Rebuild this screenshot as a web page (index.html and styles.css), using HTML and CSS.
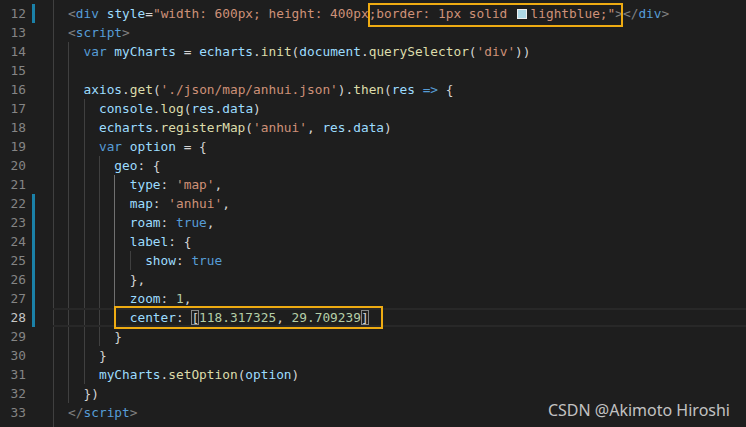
FILE: index.html
```html
<!DOCTYPE html>
<html>
<head>
<meta charset="utf-8">
<link rel="stylesheet" href="styles.css">
</head>
<body>
<div class="editor">
  <div class="ln first"><span class="num"></span><span class="git"></span><span class="code"><span class="ind"></span><span class="ind"></span></span></div>
  <div class="ln"><span class="num">12</span><span class="git mod"></span><span class="code"><span class="ind"></span><span class="ind"></span><span class="t">&lt;</span><span class="k">div</span> <span class="a">style</span>=<span class="s">"width: 600px; height: 400px;border: 1px solid </span><span class="swatch"></span><span class="s">lightblue;"</span><span class="t">&gt;&lt;/</span><span class="k">div</span><span class="t">&gt;</span></span></div>
  <div class="ln"><span class="num">13</span><span class="git"></span><span class="code"><span class="ind"></span><span class="ind"></span><span class="t">&lt;</span><span class="k">script</span><span class="t">&gt;</span></span></div>
  <div class="ln"><span class="num">14</span><span class="git"></span><span class="code"><span class="ind"></span><span class="ind"></span><span class="ind"></span><span class="k">var</span> <span class="a">myCharts</span> = <span class="a">echarts</span>.<span class="f">init</span>(<span class="a">document</span>.<span class="f">querySelector</span>(<span class="s">'div'</span>))</span></div>
  <div class="ln"><span class="num">15</span><span class="git"></span><span class="code"><span class="ind"></span><span class="ind"></span><span class="ind"></span></span></div>
  <div class="ln"><span class="num">16</span><span class="git"></span><span class="code"><span class="ind"></span><span class="ind"></span><span class="ind"></span><span class="a">axios</span>.<span class="f">get</span>(<span class="s">'./json/map/anhui.json'</span>).<span class="f">then</span>(<span class="a">res</span> <span class="k">=&gt;</span> {</span></div>
  <div class="ln"><span class="num">17</span><span class="git"></span><span class="code"><span class="ind"></span><span class="ind"></span><span class="ind"></span><span class="ind"></span><span class="a">console</span>.<span class="f">log</span>(<span class="a">res</span>.<span class="a">data</span>)</span></div>
  <div class="ln"><span class="num">18</span><span class="git"></span><span class="code"><span class="ind"></span><span class="ind"></span><span class="ind"></span><span class="ind"></span><span class="a">echarts</span>.<span class="f">registerMap</span>(<span class="s">'anhui'</span>, <span class="a">res</span>.<span class="a">data</span>)</span></div>
  <div class="ln"><span class="num">19</span><span class="git"></span><span class="code"><span class="ind"></span><span class="ind"></span><span class="ind"></span><span class="ind"></span><span class="k">var</span> <span class="a">option</span> = {</span></div>
  <div class="ln"><span class="num">20</span><span class="git"></span><span class="code"><span class="ind"></span><span class="ind"></span><span class="ind"></span><span class="ind"></span><span class="ind"></span><span class="a">geo</span>: {</span></div>
  <div class="ln"><span class="num">21</span><span class="git"></span><span class="code"><span class="ind"></span><span class="ind"></span><span class="ind"></span><span class="ind"></span><span class="ind"></span><span class="ind act"></span><span class="a">type</span>: <span class="s">'map'</span>,</span></div>
  <div class="ln"><span class="num">22</span><span class="git mod"></span><span class="code"><span class="ind"></span><span class="ind"></span><span class="ind"></span><span class="ind"></span><span class="ind"></span><span class="ind act"></span><span class="a">map</span>: <span class="s">'anhui'</span>,</span></div>
  <div class="ln"><span class="num">23</span><span class="git mod"></span><span class="code"><span class="ind"></span><span class="ind"></span><span class="ind"></span><span class="ind"></span><span class="ind"></span><span class="ind act"></span><span class="a">roam</span>: <span class="k">true</span>,</span></div>
  <div class="ln"><span class="num">24</span><span class="git mod"></span><span class="code"><span class="ind"></span><span class="ind"></span><span class="ind"></span><span class="ind"></span><span class="ind"></span><span class="ind act"></span><span class="a">label</span>: {</span></div>
  <div class="ln"><span class="num">25</span><span class="git mod"></span><span class="code"><span class="ind"></span><span class="ind"></span><span class="ind"></span><span class="ind"></span><span class="ind"></span><span class="ind act"></span><span class="ind"></span><span class="a">show</span>: <span class="k">true</span></span></div>
  <div class="ln"><span class="num">26</span><span class="git mod"></span><span class="code"><span class="ind"></span><span class="ind"></span><span class="ind"></span><span class="ind"></span><span class="ind"></span><span class="ind act"></span>},</span></div>
  <div class="ln"><span class="num">27</span><span class="git mod"></span><span class="code"><span class="ind"></span><span class="ind"></span><span class="ind"></span><span class="ind"></span><span class="ind"></span><span class="ind act"></span><span class="a">zoom</span>: <span class="n">1</span>,</span></div>
  <div class="ln cur"><span class="num">28</span><span class="git mod"></span><span class="code"><span class="ind"></span><span class="ind"></span><span class="ind"></span><span class="ind"></span><span class="ind"></span><span class="ind act"></span><span class="a">center</span>: <span class="br">[</span><span class="n">118.317325</span>, <span class="n">29.709239</span><span class="br">]</span></span></div>
  <div class="ln"><span class="num">29</span><span class="git"></span><span class="code"><span class="ind"></span><span class="ind"></span><span class="ind"></span><span class="ind"></span><span class="ind"></span>}</span></div>
  <div class="ln"><span class="num">30</span><span class="git"></span><span class="code"><span class="ind"></span><span class="ind"></span><span class="ind"></span><span class="ind"></span>}</span></div>
  <div class="ln"><span class="num">31</span><span class="git"></span><span class="code"><span class="ind"></span><span class="ind"></span><span class="ind"></span><span class="ind"></span><span class="a">myCharts</span>.<span class="f">setOption</span>(<span class="a">option</span>)</span></div>
  <div class="ln"><span class="num">32</span><span class="git"></span><span class="code"><span class="ind"></span><span class="ind"></span><span class="ind"></span>})</span></div>
  <div class="ln"><span class="num">33</span><span class="git"></span><span class="code"><span class="ind"></span><span class="ind"></span><span class="t">&lt;/</span><span class="k">script</span><span class="t">&gt;</span></span></div>
  <div class="ln"><span class="num">34</span><span class="git"></span><span class="code"><span class="ind"></span><span class="ind"></span><span class="t">&lt;/</span><span class="k">body</span><span class="t">&gt;</span></span></div>

  <div class="mark mark-a"></div>
  <div class="mark mark-b"></div>
  <div class="watermark">CSDN @Akimoto Hiroshi</div>
</div>
</body>
</html>
```

FILE: styles.css
```css
html, body {
  margin: 0;
  padding: 0;
  background: #1e1e1e;
  overflow: hidden;
}

.editor {
  position: relative;
  width: 746px;
  height: 427px;
  overflow: hidden;
  background: #1e1e1e;
  font-family: "DejaVu Sans Mono", "Liberation Mono", monospace;
  font-size: 12.8px;
  color: #d4d4d4;
  padding-top: 4px;
  box-sizing: border-box;
}

.ln {
  display: flex;
  height: 19px;
  line-height: 19px;
  white-space: pre;
}

.ln.first {
  margin-top: -19px;
}

.num {
  flex: none;
  width: 26px;
  text-align: right;
  color: #858585;
}

.ln.cur .num {
  color: #c6c6c6;
}

.git {
  flex: none;
  width: 3px;
  margin-left: 6px;
  height: 19px;
}

.git.mod {
  background: #1b81a8;
}

.code {
  position: relative;
  flex: 1;
  margin-left: 2.3px;
  white-space: pre;
}

.ln.cur .code::before {
  content: "";
  position: absolute;
  left: 15.4px;
  right: 0;
  top: 0;
  bottom: 0;
  border-top: 2px solid #282828;
  border-bottom: 2px solid #282828;
}

.ind {
  display: inline-block;
  width: 2ch;
  height: 19px;
  vertical-align: top;
  box-sizing: border-box;
}

.ind + .ind {
  border-left: 1px solid #404040;
}

.ind + .ind.act {
  border-left-color: #707070;
}

.t { color: #808080; }
.k { color: #569cd6; }
.a { color: #9cdcfe; }
.s { color: #ce9178; }
.f { color: #dcdcaa; }
.n { color: #b5cea8; }

.br {
  position: relative;
  outline: 1px solid #888888;
  outline-offset: -1px;
}

.swatch {
  display: inline-block;
  box-sizing: border-box;
  width: 10px;
  height: 10px;
  margin: 0 3.3px 0 2.2px;
  background: #add8e6;
  border: 1px solid #eeeeee;
  vertical-align: -1px;
}

.mark {
  position: absolute;
  border: 2px solid #eeab12;
  box-sizing: border-box;
}

.mark-a {
  left: 368px;
  top: 3px;
  width: 255px;
  height: 24px;
}

.mark-b {
  left: 114px;
  top: 306px;
  width: 269px;
  height: 23px;
}

.watermark {
  position: absolute;
  right: 16px;
  bottom: 7px;
  font-family: "Noto Sans", "Open Sans", sans-serif;
  font-size: 16px;
  line-height: 20px;
  color: #c2c2c2;
  white-space: nowrap;
}
```
